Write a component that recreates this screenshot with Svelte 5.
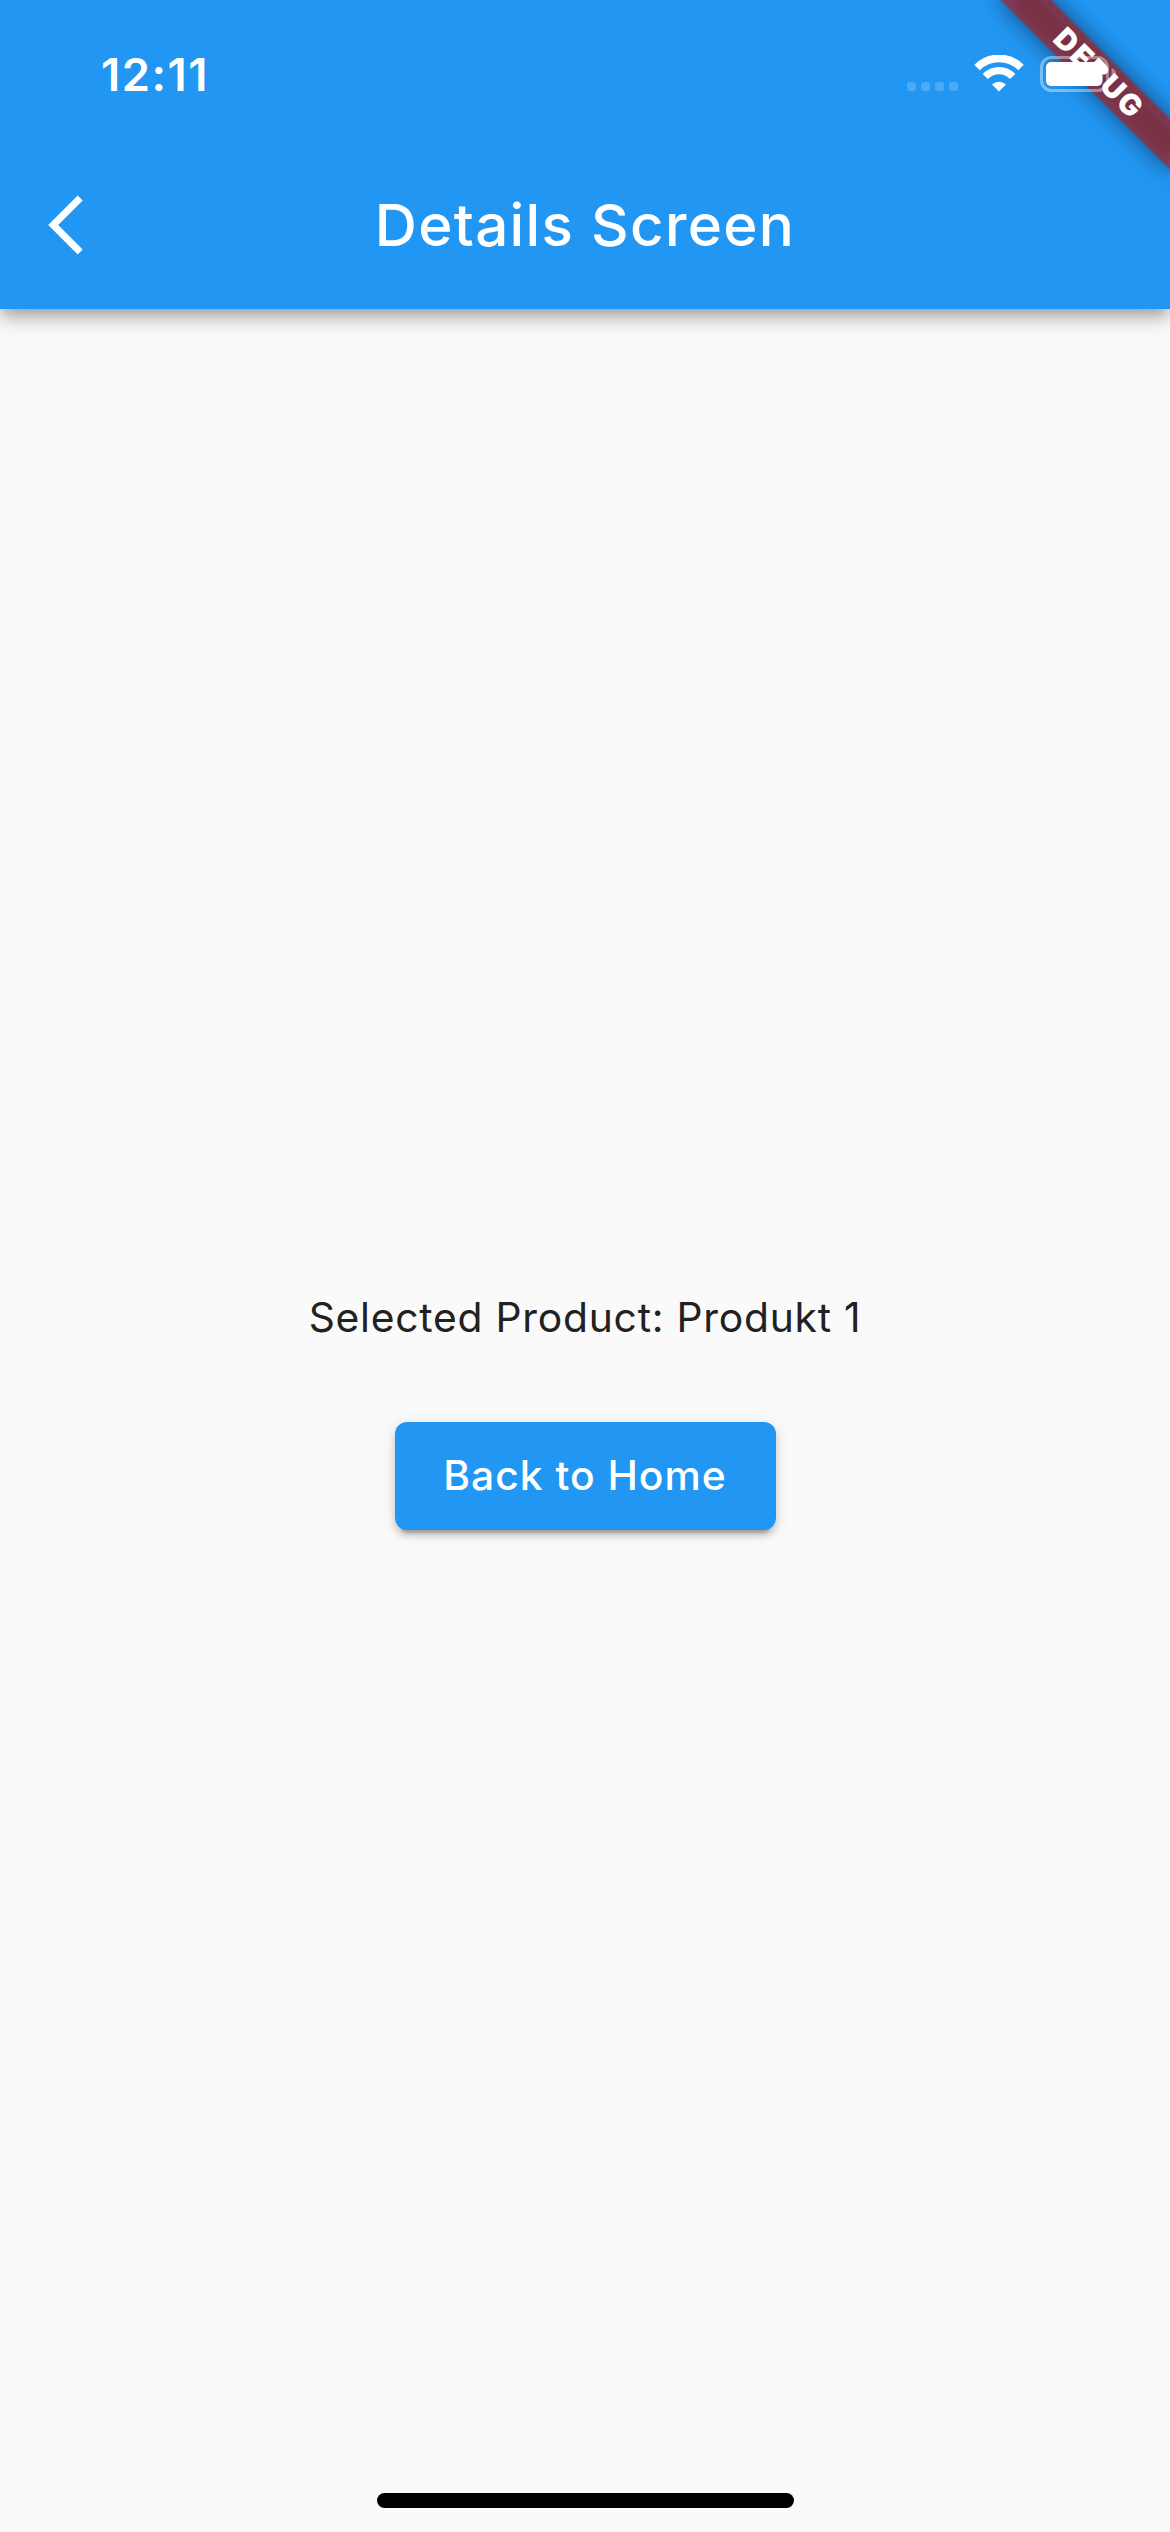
<script>
  const title = 'Details Screen';
  const product = 'Produkt 1';
  const signalDots = [0, 1, 2, 3];
</script>

<div class="screen">
  <header>
    <div class="status">
      <time>12:11</time>
      <div class="indicators">
        <div class="dots">
          {#each signalDots as dot (dot)}<i></i>{/each}
        </div>
        <svg class="wifi" width="50" height="38" viewBox="0 0 50 38" fill="none">
          <path d="M3 12.5A31 31 0 0 1 47 12.5" stroke="#fff" stroke-width="7.6" />
          <path d="M11.300 21.500A19 19 0 0 1 38.700 21.500" stroke="#fff" stroke-width="7.200" />
          <path d="M18 29.500A10.500 10.500 0 0 1 32 29.500L25 36.500Z" fill="#fff" />
        </svg>
        <svg class="battery" width="78" height="36" viewBox="0 0 78 36" fill="none">
          <rect x="1.500" y="1.500" width="66" height="33" rx="10" stroke="#fff" stroke-opacity=".4" stroke-width="3" />
          <rect x="6" y="6" width="56.500" height="24" rx="5" fill="#fff" />
          <path d="M71.500 12Q76 13.500 76 18Q76 22.500 71.500 24Z" fill="#fff" fill-opacity=".4" />
        </svg>
      </div>
    </div>
    <nav>
      <button class="back" aria-label="Back">
        <svg width="36" height="60" viewBox="0 0 36 60" fill="none">
          <path d="M33.200 3L6.200 30L33.200 57" stroke="#fff" stroke-width="7" />
        </svg>
      </button>
      <h1>{title}</h1>
    </nav>
    <svg class="banner" width="240" height="240" viewBox="0 0 240 240">
      <defs>
        <filter id="soft" filterUnits="userSpaceOnUse" x="-180" y="20" width="360" height="170">
          <feGaussianBlur stdDeviation="11.900" />
        </filter>
      </defs>
      <g transform="translate(240 0) rotate(45)">
        <rect x="-120" y="84" width="240" height="36" fill="#000" fill-opacity=".5" filter="url(#soft)" />
        <rect x="-120" y="84" width="240" height="36" fill="#b71c1c" fill-opacity=".627" />
        <text x="0.8" y="112.500" text-anchor="middle" textLength="112">DEBUG</text>
      </g>
    </svg>
  </header>

  <main>
    <p>Selected Product: {product}</p>
    <button class="home">Back to Home</button>
  </main>

  <footer><span></span></footer>
</div>

<style>
  :global(body) {
    margin: 0;
  }

  .screen {
    width: 1170px;
    height: 2532px;
    display: flex;
    flex-direction: column;
    overflow: hidden;
    background: #fafafa;
    font-family: Inter, 'Liberation Sans', sans-serif;
  }

  header {
    position: relative;
    height: 309px;
    flex: none;
    background: #2196f3;
    color: #fff;
    box-shadow:
      0 6px 12px -3px rgba(0, 0, 0, 0.2),
      0 12px 15px rgba(0, 0, 0, 0.14),
      0 3px 30px rgba(0, 0, 0, 0.12);
  }

  .banner {
    position: absolute;
    top: 0;
    right: 0;
  }

  .banner text {
    fill: #fff;
    font-size: 29.5px;
    font-weight: 900;
  }

  .status {
    position: relative;
    z-index: 1;
    height: 141px;
    box-sizing: border-box;
    padding: 47px 52px 0 101px;
    display: flex;
    justify-content: space-between;
    align-items: flex-start;
  }

  time {
    font-size: 45.4px;
    line-height: 55px;
    font-weight: 600;
    letter-spacing: 1.5px;
  }

  .indicators {
    display: flex;
    padding-top: 8px;
  }

  .dots {
    display: flex;
    gap: 5px;
    padding-top: 27px;
  }

  .dots i {
    width: 9px;
    height: 9px;
    border-radius: 3px;
    background: rgba(255, 255, 255, 0.2);
  }

  .wifi {
    margin-left: 16px;
  }

  .battery {
    margin: 1px 0 0 16px;
  }

  nav {
    height: 168px;
    display: grid;
    grid-template-columns: 168px 1fr 168px;
    align-items: center;
  }

  button {
    border: 0;
    padding: 0;
    color: #fff;
    font-family: inherit;
  }

  .back {
    display: flex;
    margin-left: 47px;
    background: none;
  }

  h1 {
    margin: 0;
    text-align: center;
    font-size: 58.3px;
    line-height: 70px;
    font-weight: 450;
    letter-spacing: 1.3px;
  }

  main {
    flex: 1;
    display: flex;
    flex-direction: column;
    align-items: center;
    padding-top: 983px;
  }

  p {
    margin: 0;
    color: #212121;
    font-size: 40.8px;
    line-height: 50px;
    letter-spacing: 0.75px;
  }

  .home {
    margin-top: 80px;
    width: 381px;
    height: 108px;
    padding-bottom: 2px;
    border-radius: 12px;
    background: #2196f3;
    font-size: 40.8px;
    font-weight: 450;
    letter-spacing: 1px;
    box-shadow:
      0 9px 3px -6px rgba(0, 0, 0, 0.2),
      0 6px 6px rgba(0, 0, 0, 0.14),
      0 3px 15px rgba(0, 0, 0, 0.12);
  }

  footer {
    display: flex;
    justify-content: center;
    padding-bottom: 24px;
  }

  footer span {
    width: 417px;
    height: 15px;
    border-radius: 8px;
    background: #000;
  }
</style>
